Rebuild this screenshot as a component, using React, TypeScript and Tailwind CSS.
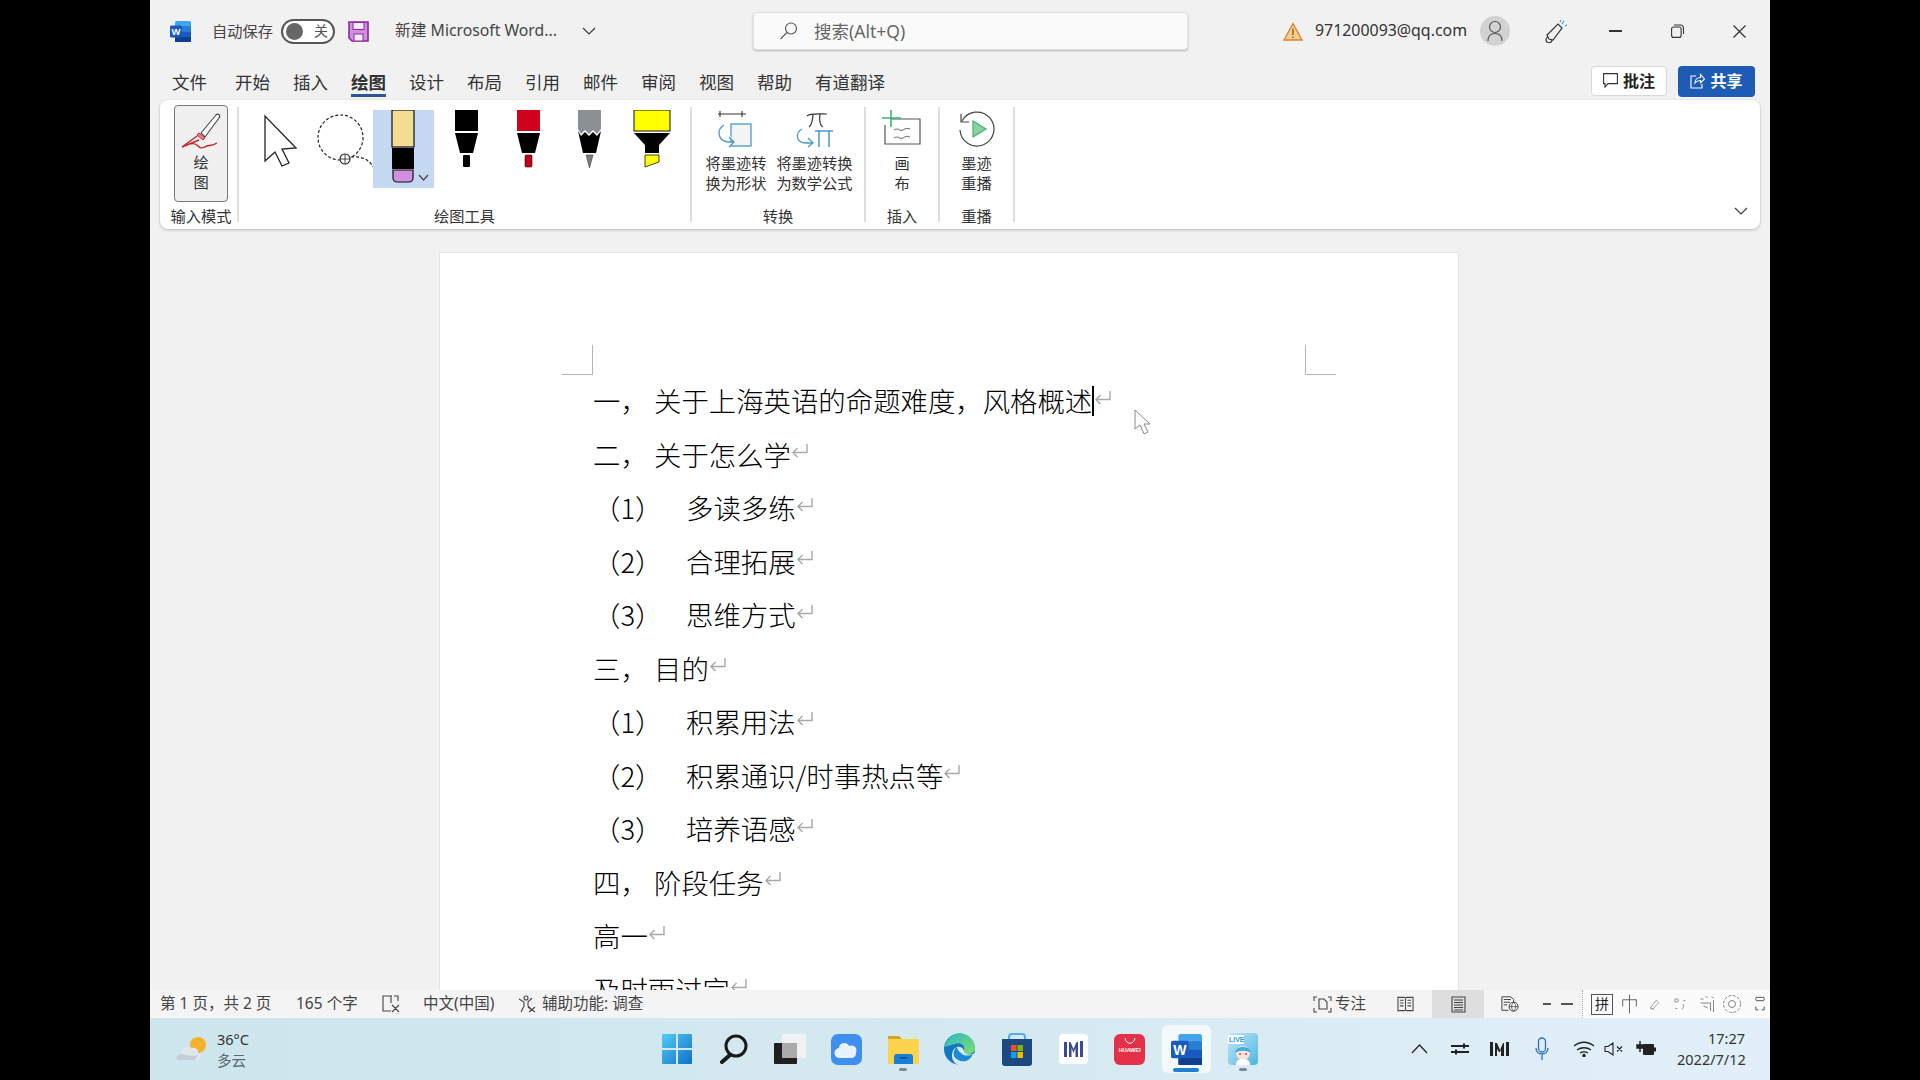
const ui = "font-['Noto_Sans','Noto_Sans_CJK_SC',sans-serif]"

const tabs = ["文件", "开始", "插入", "绘图", "设计", "布局", "引用", "邮件", "审阅", "视图", "帮助", "有道翻译"]

const lines = [
  { head: "一，", text: "关于上海英语的命题难度，风格概述", sub: false, caret: true },
  { head: "二，", text: "关于怎么学", sub: false },
  { head: "（1）", text: "多读多练", sub: true },
  { head: "（2）", text: "合理拓展", sub: true },
  { head: "（3）", text: "思维方式", sub: true },
  { head: "三，", text: "目的", sub: false },
  { head: "（1）", text: "积累用法", sub: true },
  { head: "（2）", text: "积累通识/时事热点等", sub: true },
  { head: "（3）", text: "培养语感", sub: true },
  { head: "四，", text: "阶段任务", sub: false },
  { head: "", text: "高一", sub: false },
  { head: "", text: "及时雨过完", sub: false },
]

function ReturnMark() {
  return (
    <svg width="19" height="16" viewBox="0 0 19 16" className="-mt-[6px] shrink-0" fill="none" stroke="#a8a8a8" strokeWidth="1.4">
      <path d="M16 1v8.5H2M6.5 5 2 9.5 6.5 14" />
    </svg>
  )
}

function Chevron({ className = "" }: { className?: string }) {
  return (
    <svg width="14" height="8" viewBox="0 0 14 8" className={className} fill="none" stroke="#3a3a3a" strokeWidth="1.2">
      <path d="M1 1l6 6 6-6" />
    </svg>
  )
}

function WordIcon({ size = 21 }: { size?: number }) {
  return (
    <svg width={size} height={size} viewBox="0 0 21 21" className="shrink-0">
      <rect x="5" y="0" width="16" height="21" rx="1.5" fill="#41a5ee" />
      <rect x="5" y="5" width="16" height="5.5" fill="#2b7cd3" />
      <rect x="5" y="10.5" width="16" height="5.5" fill="#185abd" />
      <rect x="5" y="16" width="16" height="5" fill="#103f91" />
      <rect x="0" y="4.5" width="12" height="12" rx="1.2" fill="#185abd" />
      <text x="6" y="14" textAnchor="middle" fontSize="9.5" fontWeight="700" fill="#fff" fontFamily="Liberation Sans, sans-serif">W</text>
    </svg>
  )
}

function Tool({ children, selected = false, className = "" }: { children: React.ReactNode; selected?: boolean; className?: string }) {
  return (
    <div className={`w-[61px] h-[78px] shrink-0 ${selected ? "bg-[#c5d8f2]" : ""} ${className}`}>
      <svg width="61" height="78" viewBox="0 0 61 78">{children}</svg>
    </div>
  )
}

function RibbonGroup({ label, width, children, labelClass = "" }: { label: string; width: string; children: React.ReactNode; labelClass?: string }) {
  return (
    <div className={`${width} h-[115px] shrink-0 flex flex-col border-r-2 border-[#dedede]`}>
      <div className="h-[99px] shrink-0 flex justify-center">{children}</div>
      <div className={`h-[16px] text-center text-[15.25px] leading-[20px] text-[#333] whitespace-nowrap ${labelClass}`}>{label}</div>
    </div>
  )
}

function BigButton({ icon, top, bottom, width }: { icon: React.ReactNode; top: string; bottom: string; width: string }) {
  return (
    <div className={`${width} shrink-0 flex flex-col items-center`}>
      <div className="h-[46px] pt-[3px]">{icon}</div>
      <div className="text-[15.25px] leading-[20px] text-[#333] text-center whitespace-nowrap">{top}</div>
      <div className="text-[15.25px] leading-[20px] text-[#333] text-center whitespace-nowrap">{bottom}</div>
    </div>
  )
}

function TaskCell({ children, dot, active }: { children: React.ReactNode; dot?: boolean; active?: boolean }) {
  return (
    <div className="relative w-[56.6px] h-[62px] shrink-0 flex items-center justify-center">
      {active && <div className="absolute left-[4px] top-[7px] w-[49px] h-[48px] rounded-md bg-white/70" />}
      <div className="relative">{children}</div>
      {dot && <div className="absolute left-[24px] top-[50px] w-[8px] h-[3px] rounded-full bg-[#7d8a91]" />}
      {active && <div className="absolute left-[15px] top-[50px] w-[26px] h-[4px] rounded-full bg-[#1f80cf]" />}
    </div>
  )
}

export default function App() {
  return (
    <div className={`${ui} w-[1920px] h-[1080px] bg-black flex overflow-hidden text-[#333]`}>
      <div className="w-[150px] shrink-0" />
      <div className="w-[1620px] shrink-0 h-full flex flex-col bg-[#f1f1f1]">
        {/* title bar */}
        <div className="h-[60px] shrink-0 flex items-center pt-[2px] whitespace-nowrap">
          <div className="ml-[20px]"><WordIcon /></div>
          <div className="ml-[21px] w-[61px] text-[15.25px] text-[#444] shrink-0">自动保存</div>
          <div className="ml-[8px] w-[54px] h-[25px] shrink-0 rounded-full border-2 border-[#555] bg-white flex items-center justify-between pl-[3px] pr-[5px]">
            <div className="w-[17px] h-[17px] rounded-full bg-[#666]" />
            <span className="text-[14px] leading-none text-[#555]">关</span>
          </div>
          <svg width="21" height="21" viewBox="0 0 21 21" className="ml-[13px] shrink-0">
            <path d="M1 1h19v19H4l-3-3z" fill="#cf8fdd" stroke="#8a2a9c" strokeWidth="1.6" />
            <rect x="5" y="1.5" width="11" height="7" fill="#f5eaf7" stroke="#8a2a9c" strokeWidth="1" />
            <rect x="6" y="13" width="9" height="7" fill="#f5eaf7" stroke="#8a2a9c" strokeWidth="1" />
          </svg>
          <div className="ml-[26px] w-[163px] text-[15.75px] text-[#444] shrink-0 overflow-hidden">新建 Microsoft Word...</div>
          <Chevron className="ml-[24px] shrink-0" />
          <div className="ml-[157px] w-[435px] h-[38px] shrink-0 rounded bg-[#fafafa] border border-[#e2e2e2] shadow-[0_1px_2px_rgba(0,0,0,0.25)] flex items-center pl-[25px]">
            <svg width="20" height="20" viewBox="0 0 20 20" fill="none" stroke="#555" strokeWidth="1.1">
              <circle cx="12" cy="7.5" r="5.5" />
              <path d="M8 11.5 1.5 18" />
            </svg>
            <span className="ml-[15px] text-[17.5px] text-[#666]">搜索(Alt+Q)</span>
          </div>
          <svg width="20" height="19" viewBox="0 0 20 19" className="ml-[95px] shrink-0">
            <path d="M10 1.5 19 18H1z" fill="#f7cf8d" stroke="#d9822b" strokeWidth="1.3" />
            <path d="M10 6.5v6.5M10 14.5v1.5" stroke="#7a4a10" strokeWidth="1.2" />
          </svg>
          <div className="ml-[12px] w-[151px] shrink-0 text-[15.9px] text-[#333]">971200093@qq.com</div>
          <div className="ml-[14px] w-[30px] h-[30px] shrink-0 rounded-full bg-[#d2d2d2] flex items-center justify-center">
            <svg width="18" height="22" viewBox="0 0 18 22" fill="none" stroke="#555" strokeWidth="1.2">
              <circle cx="9" cy="7" r="5.5" />
              <path d="M2 21c0-5 2.5-7.5 7-7.5s7 2.5 7 7.5" />
            </svg>
          </div>
          <svg width="22" height="24" viewBox="0 0 22 24" className="ml-[35px] shrink-0" fill="none" stroke="#333" strokeWidth="1.2">
            <path d="M2 16 13 5l4 4-9 12-4-1z" />
            <path d="M3 18a3 3 0 1 0 4 3" />
            <path d="M17 5l2-3M20 7l2-1M15 3l1-2" stroke="#4a9bd0" />
          </svg>
          <div className="ml-[42px] w-[13px] h-[1.5px] shrink-0 bg-[#333]" />
          <svg width="13" height="14" viewBox="0 0 13 14" className="ml-[49px] shrink-0" fill="none" stroke="#333" strokeWidth="1.1">
            <rect x="0.6" y="3" width="9.5" height="10.4" rx="2" />
            <path d="M3 1h6.5a3 3 0 0 1 3 3v6" />
          </svg>
          <svg width="13" height="13" viewBox="0 0 13 13" className="ml-[49px] shrink-0" fill="none" stroke="#333" strokeWidth="1.2">
            <path d="M.5.5l12 12M12.5.5l-12 12" />
          </svg>
        </div>

        {/* tabs */}
        <div className="h-[40px] shrink-0 flex items-center pl-[22px] pr-[15px] pt-[2px] text-[17.5px] text-[#333] whitespace-nowrap">
          <div className="flex gap-[23px] mt-[2px]">
            {tabs.map((t, i) => (
              <div key={t} className={`relative ${i === 0 ? "mr-[5px]" : ""} ${t === "绘图" ? "font-bold" : ""}`}>
                {t}
                {t === "绘图" && <div className="absolute left-0 right-0 top-[25px] h-[3px] bg-[#2b579a]" />}
              </div>
            ))}
          </div>
          <div className="ml-auto flex gap-[11px]">
            <div className="w-[76px] h-[30px] rounded bg-white border border-[#d8d8d8] flex items-center justify-center gap-[5px]">
              <svg width="15" height="15" viewBox="0 0 15 15" fill="none" stroke="#333" strokeWidth="1.1">
                <path d="M.6.6h13.8v10H5L2 14v-3.4H.6z" />
              </svg>
              <span className="text-[16px] font-bold text-[#222]">批注</span>
            </div>
            <div className="w-[77px] h-[31px] rounded bg-[#1d5bb5] flex items-center justify-center gap-[5px]">
              <svg width="15" height="16" viewBox="0 0 15 16" fill="none" stroke="#fff" strokeWidth="1.1">
                <path d="M6 3H1v12h11v-4M5 10c0-3.5 2.5-5.5 5.5-5.5V1.5L14.5 6l-4 4V7.5C8 7.5 6.5 8 5 10z" />
              </svg>
              <span className="text-[16px] font-bold text-white">共享</span>
            </div>
          </div>
        </div>

        {/* ribbon */}
        <div className="relative h-[129px] shrink-0 ml-[10px] mr-[10px] bg-white rounded-lg shadow-[0_1px_3px_rgba(0,0,0,0.25)] flex pt-[7px]">
          <RibbonGroup label="输入模式" width="w-[79px]" labelClass="pl-[5px]">
            <div className="w-[54px] h-[97px] ml-[5px] mt-[-2px] rounded border border-[#777] bg-[#f0f0f0] flex flex-col items-center">
              <svg width="52" height="46" viewBox="0 0 52 46" fill="none" className="shrink-0">
                <path d="M26 27 41 9c2-2 5 0 3 3L30 31z" fill="#fff" stroke="#444" strokeWidth="1.1" />
                <path d="M24 27l6 5-2 2-6-5z" fill="#e98a8a" stroke="#c8242c" strokeWidth="1" />
                <path d="M22 30 7 41l17-7M7 41c8-4 13-5 16-1s6 1 9 0 5 0 10-3" stroke="#c8242c" strokeWidth="1.4" />
              </svg>
              <div className="text-[15.25px] leading-[20px] text-[#333]">绘</div>
              <div className="text-[15.25px] leading-[20px] text-[#333]">图</div>
            </div>
          </RibbonGroup>
          <RibbonGroup label="绘图工具" width="w-[453px]">
            <div className="w-full flex pl-[12px] pt-[3px]">
              <Tool>
                <path d="M14 6v45l10-9 7 14 7-3-7-14 14-1z" fill="#fff" stroke="#222" strokeWidth="1.3" />
              </Tool>
              <Tool>
                <ellipse cx="28.5" cy="27.5" rx="22.5" ry="22.5" fill="none" stroke="#222" strokeWidth="1.2" strokeDasharray="3 2" />
                <circle cx="33" cy="49" r="5" fill="#fff" stroke="#222" strokeWidth="1.1" />
                <path d="M28 49h10M33 44v10" stroke="#222" strokeWidth="0.8" />
                <path d="M39 47c10-1 18 2 22 10" fill="none" stroke="#222" strokeWidth="1.2" strokeDasharray="3 2" />
              </Tool>
              <Tool selected>
                <rect x="19" y="0" width="22" height="37" fill="#f5dc95" stroke="#111" strokeWidth="1.2" />
                <rect x="19" y="38" width="22" height="21" fill="#000" />
                <path d="M20 60h20v8a4 4 0 0 1-4 4H24a4 4 0 0 1-4-4z" fill="#d18fdf" stroke="#111" strokeWidth="1.2" />
                <path d="M46 65l4.500 5 4.500-5" fill="none" stroke="#444" strokeWidth="1.2" />
              </Tool>
              <Tool className="ml-[2px]">
                <rect x="19" y="0" width="23" height="21" fill="#000" />
                <path d="M19 23h23l-5 20H24z" fill="#000" />
                <rect x="27" y="45" width="7" height="12" rx="1" fill="#000" />
              </Tool>
              <Tool className="ml-[1px]">
                <rect x="19" y="0" width="23" height="21" fill="#d0021b" />
                <path d="M19 23h23l-5 20H24z" fill="#000" />
                <rect x="27" y="45" width="7" height="12" rx="1" fill="#c00018" stroke="#111" strokeWidth="0.6" />
              </Tool>
              <Tool>
                <path d="M19 0h23v19l-4 5-4-4-4 4-4-4-4 4-3-5z" fill="#8a9094" />
                <path d="M19 21l3 5 4-4 4 4 4-4 4 4 4-5-5 22H24z" fill="#000" />
                <path d="M27 45h7l-3.500 13z" fill="#7d7d7d" stroke="#222" strokeWidth="0.5" />
              </Tool>
              <Tool className="ml-[1px]">
                <rect x="13" y="0" width="36" height="21" fill="#ffff00" stroke="#111" strokeWidth="1" />
                <path d="M13 23h36l-11 12v8H24v-8z" fill="#000" />
                <path d="M24 45h14v7l-14 5z" fill="#ffff00" stroke="#111" strokeWidth="0.8" />
              </Tool>
            </div>
          </RibbonGroup>
          <RibbonGroup label="转换" width="w-[174px]">
            <div className="flex w-full pl-[4px]">
              <BigButton
                width="w-[80px]"
                top="将墨迹转"
                bottom="换为形状"
                icon={
                  <svg width="40" height="40" viewBox="0 0 40 40" fill="none">
                    <path d="M2 4h28M4 1v6M26 1v6" stroke="#333" strokeWidth="1.1" />
                    <rect x="15" y="14" width="20" height="22" fill="#f4f4f4" stroke="#4a9bc4" strokeWidth="1.3" />
                    <path d="M8 15c-8 5-6 16 4 17h6M13 27l5 5-5 5" stroke="#4a9bc4" strokeWidth="1.3" fill="#fff" />
                  </svg>
                }
              />
              <BigButton
                width="w-[77px]"
                top="将墨迹转换"
                bottom="为数学公式"
                icon={
                  <svg width="40" height="40" viewBox="0 0 40 40" fill="none">
                    <path d="M12 6c3-3 12-2 20-2M18 4c0 6-2 12-4 13M25 4c-1 5 0 12 3 13" stroke="#333" strokeWidth="1.2" />
                    <path d="M20 21h18M24 21v16M34 21v16" stroke="#4a9bc4" strokeWidth="1.5" />
                    <path d="M7 19c-7 4-6 13 3 14h8M13 28l5 5-5 4" stroke="#4a9bc4" strokeWidth="1.3" />
                  </svg>
                }
              />
            </div>
          </RibbonGroup>
          <RibbonGroup label="插入" width="w-[74px]">
            <BigButton
              width="w-[74px]"
              top="画"
              bottom="布"
              icon={
                <svg width="40" height="36" viewBox="0 0 40 36" fill="none">
                  <path d="M8 9h30v25H3V15" stroke="#555" strokeWidth="1.2" />
                  <path d="M0 8h19M9 0v17" stroke="#3cb371" strokeWidth="1.6" />
                  <path d="M12 20c4-3 6 2 9 0s4-2 7-1M12 28c4-3 6 2 9 0s4-2 7-1" stroke="#666" strokeWidth="1" />
                </svg>
              }
            />
          </RibbonGroup>
          <RibbonGroup label="重播" width="w-[75px]">
            <BigButton
              width="w-[75px]"
              top="墨迹"
              bottom="重播"
              icon={
                <svg width="38" height="38" viewBox="0 0 38 38" fill="none">
                  <path d="M4 11A17 17 0 1 1 2 20" stroke="#444" strokeWidth="1.2" />
                  <path d="M3 4v8h8" stroke="#444" strokeWidth="1.2" />
                  <path d="M15 11l13 8-13 8z" fill="#8fd19e" stroke="#3cb371" strokeWidth="1.2" />
                </svg>
              }
            />
          </RibbonGroup>
          <Chevron className="absolute right-[12px] bottom-[14px]" />
        </div>

        {/* document canvas */}
        <div className="relative flex-1 overflow-hidden">
          <div className="relative ml-[289px] mt-[23px] w-[1020px] h-[900px] bg-white border border-[#e2e2e2] pt-[121px] pl-[153px] font-['Noto_Sans_CJK_SC',sans-serif] text-[27.4px] text-[#000] font-light">
            <div className="absolute left-[122px] top-[92px] w-[31px] h-[30px] border-r border-b border-[#b5b5b5]" />
            <div className="absolute left-[865px] top-[92px] w-[31px] h-[30px] border-l border-b border-[#b5b5b5]" />
            {lines.map((l, i) => (
              <div key={i} className="h-[53.5px] flex items-center whitespace-nowrap">
                {l.head && <span className={`${l.sub ? "w-[93px]" : "w-[61px]"} shrink-0`}>{l.head}</span>}
                <span>{l.text}</span>
                {l.caret && <span className="w-[1.5px] h-[30px] bg-black shrink-0" />}
                <ReturnMark />
              </div>
            ))}
            <svg width="18" height="26" viewBox="0 0 18 26" className="absolute left-[694px] top-[156px]" fill="#fff" stroke="#888" strokeWidth="1">
              <path d="M1 1v19l5-4 4 9 4-2-4-8h6z" />
            </svg>
          </div>
        </div>

        {/* status bar */}
        <div className="h-[28px] shrink-0 flex items-center bg-[#f4f4f4] text-[15.5px] text-[#444] whitespace-nowrap">
          <div className="ml-[10px] w-[114px] shrink-0">第 1 页，共 2 页</div>
          <div className="ml-[22px] w-[62px] shrink-0">165 个字</div>
          <svg width="18" height="18" viewBox="0 0 18 18" className="ml-[24px] shrink-0" fill="none" stroke="#444" strokeWidth="1.1">
            <path d="M10 1H1v15h8M9 1v7M12 1h4v5M10 10l7 7M17 10l-7 7" />
          </svg>
          <div className="ml-[23px] w-[72px] shrink-0">中文(中国)</div>
          <svg width="18" height="18" viewBox="0 0 18 18" className="ml-[23px] shrink-0" fill="none" stroke="#444" strokeWidth="1.1">
            <circle cx="8" cy="3" r="2" />
            <path d="M1 4l5 3v4l-3 6M14 3l-4 4v4l3 3M10 12l7 5M17 12l-6 5" />
          </svg>
          <div className="ml-[6px] w-[101px] shrink-0">辅助功能: 调查</div>
          <svg width="19" height="17" viewBox="0 0 19 17" className="ml-[670px] shrink-0" fill="none" stroke="#444" strokeWidth="1.1">
            <path d="M1 5V1h3M15 1h3v4M1 12v4h3M15 16h3v-4M6 13V3h5l3 3v7z" />
          </svg>
          <div className="ml-[3px] w-[31px] shrink-0">专注</div>
          <svg width="17" height="16" viewBox="0 0 18 16" className="ml-[31px] shrink-0" fill="none" stroke="#444" strokeWidth="1.1">
            <path d="M1 1h7l1 1 1-1h7v14h-7l-1-1-1 1H1zM9 2v12M3 4h4M3 7h4M3 10h4M11 4h4M11 7h4M11 10h4" />
          </svg>
          <div className="ml-[18px] w-[52px] h-[28px] shrink-0 bg-[#dedede] flex items-center justify-center">
            <svg width="15" height="17" viewBox="0 0 15 17" fill="none" stroke="#444" strokeWidth="1.1">
              <path d="M1 1h13v15H1zM3 4h9M3 6.500h9M3 9h9M3 11.500h9M3 14h9" />
            </svg>
          </div>
          <svg width="18" height="18" viewBox="0 0 20 18" className="ml-[17px] shrink-0" fill="none" stroke="#444" strokeWidth="1.1">
            <path d="M8 16H1V1h10l3 3v4M3 4h8M3 7h7M3 10h4" />
            <circle cx="14" cy="12" r="5" fill="#fff" />
            <path d="M9 12h10M14 7c-3 3-3 7 0 10M14 7c3 3 3 7 0 10" strokeWidth="0.9" />
          </svg>
          <div className="ml-[24px] w-[8px] h-[1.500px] shrink-0 bg-[#555]" />
          <div className="ml-[10px] w-[12px] h-[1.500px] shrink-0 bg-[#555]" />
          <div className="ml-[9px] flex-1 h-full bg-[#fbfbfb] border-l border-dotted border-[#aaa] flex items-center pl-[8px]">
            <div className="w-[22px] h-[21px] shrink-0 border border-[#555] flex items-center justify-center text-[14px] text-[#222] leading-none">拼</div>
            <svg width="17" height="22" viewBox="0 0 20 22" className="ml-[8px] shrink-0" fill="none" stroke="#666" strokeWidth="1.2">
              <path d="M2 6h16v8M2 14V6M10 0v22" />
            </svg>
            <svg width="14" height="16" viewBox="0 0 18 18" className="ml-[10px] shrink-0" fill="none" stroke="#888" strokeWidth="1">
              <path d="M3 14 11 4l3 3-7 8zM3 15c3 0 4 1 5 2" />
            </svg>
            <svg width="16" height="16" viewBox="0 0 18 18" className="ml-[10px] shrink-0" fill="none" stroke="#777" strokeWidth="1">
              <circle cx="5" cy="5" r="2" />
              <path d="M12 9c2 2 1 4-1 6M4 14h2M13 5h2" />
            </svg>
            <svg width="19" height="18" viewBox="0 0 18 18" className="ml-[10px] shrink-0" fill="none" stroke="#888" strokeWidth="1">
              <path d="M2 4h3M7 1l2 2M13 2l2 1M2 8h10v8M5 11l4 2M15 5v12" />
            </svg>
            <svg width="20" height="20" viewBox="0 0 20 20" className="ml-[5px] shrink-0" fill="none" stroke="#888" strokeWidth="1">
              <circle cx="10" cy="10" r="3.500" />
              <circle cx="10" cy="10" r="8.500" strokeDasharray="3 1.500" />
            </svg>
            <svg width="10" height="18" viewBox="0 0 12 18" className="ml-[13px] shrink-0" fill="none" stroke="#555" strokeWidth="1.2">
              <rect x="1" y="1" width="10" height="4" rx="1" />
              <path d="M1 12v4h3M8 16h3v-4" />
            </svg>
          </div>
        </div>

        {/* taskbar */}
        <div className="h-[62px] shrink-0 flex items-center bg-gradient-to-r from-[#cde5ec] via-[#d5e9f0] to-[#e2eff9]">
          <div className="w-[498.700px] shrink-0 flex items-center pl-[26px]">
            <svg width="32" height="30" viewBox="0 0 32 30">
              <circle cx="22" cy="11" r="8" fill="#f5b32b" />
              <path d="M3 26c-4 0-3-6 2-6 1-6 6-9 11-6 4-1 7 2 6 5 3 0 4 7-1 7z" fill="#dfe6ec" />
              <path d="M3 26c-4 0-3-6 2-6 6 1 12 3 17 1-1 3-3 5-6 5z" fill="#c3ced6" />
            </svg>
            <div className="ml-[9px] mt-[2px] flex flex-col text-[14.5px] leading-[21px]">
              <span className="text-[#333]">36°C</span>
              <span className="text-[#5c6a70]">多云</span>
            </div>
          </div>
          <TaskCell>
            <svg width="30" height="30" viewBox="0 0 30 30">
              <defs>
                <linearGradient id="win" x1="0" y1="0" x2="1" y2="1">
                  <stop offset="0" stopColor="#52cdf5" />
                  <stop offset="1" stopColor="#0f6fc6" />
                </linearGradient>
              </defs>
              <path d="M1 0h13v14H0V1a1 1 0 0 1 1-1zM16 0h13a1 1 0 0 1 1 1v13H16zM0 16h14v14H1a1 1 0 0 1-1-1zM16 16h14v13a1 1 0 0 1-1 1H16z" fill="url(#win)" />
            </svg>
          </TaskCell>
          <TaskCell>
            <svg width="28" height="30" viewBox="0 0 28 30" fill="none" stroke="#1a1a1a">
              <circle cx="16" cy="12" r="10" strokeWidth="3" />
              <path d="M10 21 2 28" strokeWidth="4" strokeLinecap="round" />
            </svg>
          </TaskCell>
          <TaskCell>
            <svg width="32" height="30" viewBox="0 0 32 30">
              <rect x="0" y="9" width="23" height="21" rx="1" fill="#1f1f1f" />
              <rect x="8" y="0" width="24" height="24" rx="1" fill="#f2f2f2" opacity="0.9" />
              <rect x="8" y="9" width="15" height="15" fill="#aaa" />
            </svg>
          </TaskCell>
          <TaskCell>
            <svg width="31" height="31" viewBox="0 0 31 31">
              <rect width="31" height="31" rx="7" fill="#3f8ff0" />
              <path d="M9 24a5 5 0 0 1-1-10c0-5 8-7 10-2 5-2 9 2 7 7 0 3-2 5-5 5z" fill="#e8f3ff" />
            </svg>
          </TaskCell>
          <TaskCell dot>
            <svg width="31" height="30" viewBox="0 0 31 30">
              <path d="M0 2h11l3 3H0z" fill="#d6a520" />
              <rect x="0" y="5" width="31" height="25" rx="1" fill="#fcd34d" />
              <path d="M6 30v-7a3 3 0 0 1 3-3h13a3 3 0 0 1 3 3v7z" fill="#1a7fd4" />
              <rect x="12" y="23" width="7" height="1.500" fill="#0a4e8a" />
            </svg>
          </TaskCell>
          <TaskCell>
            <svg width="31" height="32" viewBox="0 0 31 32">
              <defs>
                <linearGradient id="edge" x1="0" y1="0" x2="1" y2="1">
                  <stop offset="0" stopColor="#2bb8c8" />
                  <stop offset="1" stopColor="#7fe06a" />
                </linearGradient>
              </defs>
              <circle cx="15.500" cy="16" r="15.500" fill="#1275c4" />
              <path d="M.5 14C3 4 10 .5 15.500.5 25 .5 31 8 31 15c0 4-3 6-7 6h-3c-2-1-2-2-1-4 1-5-4-8-9-6-4 1-7 2-10.500 3z" fill="url(#edge)" />
              <path d="M13 14c3-1 6 .5 6.500 3 .5 3 3 4.500 6 4.500 2 0 3-.5 5-1.500v12H16c-4 0-8-4-8-9 0-5 2-8 5-9z" fill="#d7eaf2" />
              <path d="M13 14c-3 2-4 6-3 9 2 4 7 6 12 5 3-1 5-3 7-7-3 2-8 2-11 0-3-2-5-5-5-7z" fill="#1a8bd6" />
            </svg>
          </TaskCell>
          <TaskCell>
            <svg width="30" height="33" viewBox="0 0 30 33">
              <path d="M7 9V4a3 3 0 0 1 3-3h10a3 3 0 0 1 3 3v5" fill="none" stroke="#4fb0e6" strokeWidth="2" />
              <path d="M0 6h30v24a3 3 0 0 1-3 3H3a3 3 0 0 1-3-3z" fill="#1c4a80" />
              <rect x="9" y="12" width="5.500" height="6" fill="#f25022" />
              <rect x="15.500" y="12" width="5.500" height="6" fill="#7fba00" />
              <rect x="9" y="19" width="5.500" height="6" fill="#00a4ef" />
              <rect x="15.500" y="19" width="5.500" height="6" fill="#ffb900" />
            </svg>
          </TaskCell>
          <TaskCell>
            <svg width="29" height="30" viewBox="0 0 29 30">
              <rect width="29" height="30" rx="4" fill="#fff" />
              <path d="M5 8h3v15H5zM10 8h1.500l3 7 3-7H19v15h-2.500V14l-2 5-2-5v9H10zM21 7h3v16h-3z" fill="#3c4a94" />
            </svg>
          </TaskCell>
          <TaskCell>
            <div className="w-[31px] h-[31px] rounded-md bg-[#e5304a] flex flex-col items-center pt-[3px]">
              <svg width="12" height="8" viewBox="0 0 12 8" fill="none" stroke="#fff" strokeWidth="1">
                <path d="M1 1c1 7 9 7 10 0" />
              </svg>
              <span className="font-['Liberation_Sans',sans-serif] text-[5.500px] font-bold text-white leading-none mt-[3px]">HUAWEI</span>
            </div>
          </TaskCell>
          <TaskCell active>
            <WordIcon size={31} />
          </TaskCell>
          <TaskCell dot>
            <div className="w-[30px] h-[32px] rounded bg-gradient-to-br from-[#bde7f7] to-[#4bb5e0] flex flex-col overflow-hidden">
              <span className="bg-white w-[16px] font-['Liberation_Sans',sans-serif] text-[7px] font-bold text-[#2aa0d8] leading-[9px] px-[1px] mt-[2px]">LIVE</span>
              <svg width="30" height="21" viewBox="0 0 30 21">
                <circle cx="15" cy="9" r="7" fill="#fbe3da" />
                <path d="M7 9c0-8 16-8 16 0-4-3-12-3-16 0z" fill="#3fb0e3" />
                <path d="M8 21c0-5 3-6 7-6s7 1 7 6z" fill="#fff" />
                <circle cx="12" cy="10" r="1" fill="#d2453f" />
                <circle cx="18" cy="10" r="1" fill="#d2453f" />
              </svg>
            </div>
          </TaskCell>
          <div className="ml-auto pr-[25px] flex items-center text-[#333]">
            <svg width="17" height="10" viewBox="0 0 17 10" fill="none" stroke="#222" strokeWidth="1.2"><path d="M1 9l7.500-8L16 9" /></svg>
            <svg width="18" height="16" viewBox="0 0 18 16" className="ml-[23px]" fill="#222">
              <path d="M0 4h12V2.500h2V4h4v2h-4v1.500h-2V6H0zM0 10h4V8.500h2V10h12v2H6v1.500H4V12H0z" />
            </svg>
            <svg width="19" height="14" viewBox="0 0 19 14" className="ml-[21px]" fill="#222">
              <path d="M0 0h3v14H0zM5 1h2l3 7 3-7h1v13h-3V7l-1 3H9L7 7v7H5zM16 0h3v14h-3z" />
            </svg>
            <svg width="14" height="24" viewBox="0 0 14 24" className="ml-[26px]" fill="none" stroke="#2f6fc9" strokeWidth="1.3">
              <rect x="3.500" y="1" width="7" height="14" rx="3.500" />
              <path d="M1 11c0 8 12 8 12 0M7 18v5" />
            </svg>
            <svg width="22" height="16" viewBox="0 0 22 16" className="ml-[24px]" fill="none" stroke="#222" strokeWidth="1.4">
              <path d="M1 5c6-5 14-5 20 0M4 9c4-3 10-3 14 0M7 12c2-1.500 6-1.500 8 0" />
              <circle cx="11" cy="14.500" r="1" fill="#222" />
            </svg>
            <svg width="20" height="14" viewBox="0 0 20 14" className="ml-[9px]" fill="none" stroke="#222" strokeWidth="1.1">
              <path d="M1 4.500h3L9 1v12L4 9.500H1zM13 4.500l5 5M18 4.500l-5 5" />
            </svg>
            <svg width="20" height="16" viewBox="0 0 20 16" className="ml-[12px]" fill="#222">
              <path d="M4 0v4M1 4h6v3H1zM4 7v4" stroke="#222" strokeWidth="1.500" />
              <rect x="7" y="3" width="11" height="11" rx="1" />
              <rect x="18" y="6.500" width="2" height="4" />
            </svg>
            <div className="ml-[21px] w-[68px] text-right text-[14.500px] leading-[21px] text-[#333] whitespace-nowrap">
              <div>17:27</div>
              <div>2022/7/12</div>
            </div>
          </div>
        </div>
      </div>
      <div className="flex-1" />
    </div>
  )
}
